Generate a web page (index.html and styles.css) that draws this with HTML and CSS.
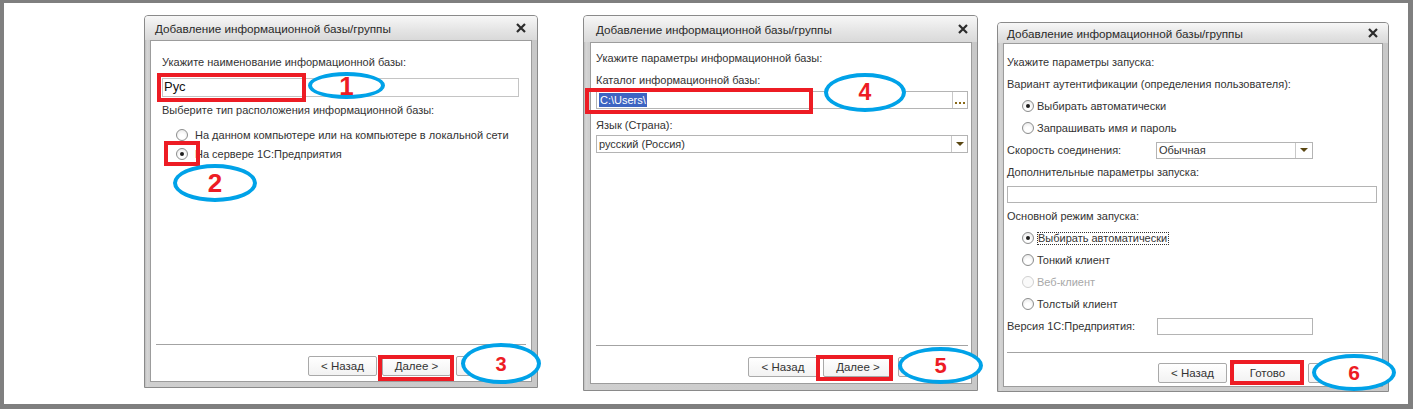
FILE: index.html
```html
<!DOCTYPE html>
<html lang="ru">
<head>
<meta charset="utf-8">
<title>Добавление информационной базы</title>
<link rel="stylesheet" href="styles.css">
</head>
<body>
<div class="canvas">

  <section class="dlg d1">
    <header class="tb">
      <span class="tt">Добавление информационной базы/группы</span>
      <svg class="x" width="10" height="10" viewBox="0 0 10 10"><path d="M1 1L9 9M9 1L1 9" stroke="#2b2b2b" stroke-width="2.2"/></svg>
    </header>
    <div class="body">
      <div class="main">
        <div class="lbl l1">Укажите наименование информационной базы:</div>
        <div class="inp name">Рус</div>
        <div class="lbl l2">Выберите тип расположения информационной базы:</div>
        <div class="radio r1"><span class="rb"></span>На данном компьютере или на компьютере в локальной сети</div>
        <div class="radio"><span class="rb on"></span>На сервере 1С:Предприятия</div>
      </div>
      <div class="foot">
        <button class="btn">&lt; Назад</button>
        <button class="btn">Далее &gt;</button>
        <button class="btn" aria-label="Отмена"></button>
      </div>
    </div>
    <span class="red m1a"></span>
    <span class="oval o1a"><b class="num n1">1</b></span>
    <span class="red m1b"></span>
    <span class="oval o1b"><b class="num n2">2</b></span>
    <span class="red m1c"></span>
    <span class="oval o1c"><b class="num n3">3</b></span>
  </section>

  <section class="dlg d2">
    <header class="tb">
      <span class="tt">Добавление информационной базы/группы</span>
      <svg class="x" width="10" height="10" viewBox="0 0 10 10"><path d="M1 1L9 9M9 1L1 9" stroke="#2b2b2b" stroke-width="2.2"/></svg>
    </header>
    <div class="body">
      <div class="main">
        <div class="lbl a1">Укажите параметры информационной базы:</div>
        <div class="lbl a2">Каталог информационной базы:</div>
        <div class="inp path"><span class="sel">C:\Users\</span><span class="dots"><svg width="11" height="3" viewBox="0 0 11 3"><rect x="0" y="0" width="2" height="2" fill="#8a6a1a"/><rect x="4" y="0" width="2" height="2" fill="#8a6a1a"/><rect x="8" y="0" width="2" height="2" fill="#8a6a1a"/></svg></span></div>
        <div class="lbl a3">Язык (Страна):</div>
        <div class="inp combo lang"><span class="val">русский (Россия)</span><span class="dd"><i class="arr"></i></span></div>
      </div>
      <div class="foot">
        <button class="btn">&lt; Назад</button>
        <button class="btn">Далее &gt;</button>
        <button class="btn" aria-label="Отмена"></button>
      </div>
    </div>
    <span class="red m2a"></span>
    <span class="oval o2a"><b class="num n4">4</b></span>
    <span class="red m2b"></span>
    <span class="oval o2b"><b class="num n5">5</b></span>
  </section>

  <section class="dlg d3">
    <header class="tb">
      <span class="tt">Добавление информационной базы/группы</span>
      <svg class="x" width="10" height="10" viewBox="0 0 10 10"><path d="M1 1L9 9M9 1L1 9" stroke="#2b2b2b" stroke-width="2.2"/></svg>
    </header>
    <div class="body">
      <div class="main">
        <div class="row">Укажите параметры запуска:</div>
        <div class="row">Вариант аутентификации (определения пользователя):</div>
        <div class="row radio"><span class="rb on"></span>Выбирать автоматически</div>
        <div class="row radio"><span class="rb"></span>Запрашивать имя и пароль</div>
        <div class="row"><span class="cap">Скорость соединения:</span><span class="inp combo speed"><span class="val">Обычная</span><span class="dd"><i class="arr"></i></span></span></div>
        <div class="row">Дополнительные параметры запуска:</div>
        <div class="row"><span class="inp wide"></span></div>
        <div class="row">Основной режим запуска:</div>
        <div class="row radio"><span class="rb on"></span><span class="focus">Выбирать автоматически</span></div>
        <div class="row radio"><span class="rb"></span>Тонкий клиент</div>
        <div class="row radio off"><span class="rb"></span>Веб-клиент</div>
        <div class="row radio"><span class="rb"></span>Толстый клиент</div>
        <div class="row"><span class="cap">Версия 1С:Предприятия:</span><span class="inp ver"></span></div>
      </div>
      <div class="foot">
        <button class="btn">&lt; Назад</button>
        <button class="btn">Готово</button>
        <button class="btn" aria-label="Отмена"></button>
      </div>
    </div>
    <span class="red m3a"></span>
    <span class="oval o3a"><b class="num n6">6</b></span>
  </section>

</div>
</body>
</html>
```
FILE: styles.css
```css
html, body {
  margin: 0;
  padding: 0;
  background: #fff;
}

.canvas {
  width: 1413px;
  height: 409px;
  box-sizing: border-box;
  border-style: solid;
  border-color: #7f7f7f;
  border-width: 3px 5px 5px 4px;
  background: #fff;
  display: flex;
  align-items: flex-start;
  font-family: "Liberation Sans", Arial, sans-serif;
  color: #333;
}

/* dialog window */
.dlg {
  position: relative;
  box-sizing: border-box;
  display: flex;
  flex-direction: column;
  border: 1px solid #8a8a8a;
  border-radius: 4px 4px 0 0;
  background: linear-gradient(90deg, #bdbdbd, #d6d6d6 2px, #cfcfcf 4px, #c8c8c8);
  padding: 0 5px 5px;
}
.d1 { margin: 12px 0 0 140px; width: 394px; height: 373px; }
.d2 { margin: 12px 0 0 45px; width: 395px; height: 376px; padding: 0 5px 6px 6px; }
.d3 { margin: 19px 0 0 19px; width: 392px; height: 370px; padding: 0 5px 4px; }

.tb {
  display: flex;
  align-items: center;
  justify-content: space-between;
  height: 24px;
  margin: 0 -5px;
  padding: 0 11px 0 10px;
  background: linear-gradient(#f7f7f7, #e4e4e4 60%, #d9d9d9);
  border-radius: 3px 3px 0 0;
  font-size: 11.7px;
  color: #2a2a2a;
}
.d2 .tb { height: 26px; margin: 0 -5px 0 -6px; padding: 0 9px 0 12px; }
.d3 .tb { height: 20px; padding: 0 10px 0 9px; }
.x { display: block; }

.body {
  flex: 1;
  display: flex;
  flex-direction: column;
  background: #fff;
  border: 1px solid #9c9c9c;
}
.main { flex: 1; display: flex; flex-direction: column; }

.lbl { line-height: 14px; white-space: nowrap; }

.inp {
  box-sizing: border-box;
  border: 1px solid #b4b4b4;
  background: #fff;
}

/* radios */
.radio { display: flex; align-items: center; white-space: nowrap; }
.rb {
  position: relative;
  flex: none;
  box-sizing: border-box;
  width: 12px;
  height: 12px;
  border-radius: 50%;
  border: 1px solid #8c8d8d;
  background: radial-gradient(circle at 50% 65%, #fff 30%, #e3e3e3);
}
.rb.on::after {
  content: "";
  position: absolute;
  left: 3px;
  top: 3px;
  width: 4px;
  height: 4px;
  border-radius: 50%;
  background: #1e1e1e;
}

/* dialog 1 content */
.d1 .main { padding: 14px 12px 0 11px; font-size: 11px; }
.d1 .l2 { margin-top: 6px; }
.name {
  margin-top: 9px;
  height: 19px;
  border-color: #c4c4c4;
  font-size: 13px;
  line-height: 13px;
  padding: 1px 0 0 1px;
  color: #111;
}
.d1 .radio { height: 19px; padding-left: 14px; }
.d1 .r1 { margin-top: 8px; }
.d1 .rb { margin-right: 7px; }

/* dialog 2 content */
.d2 .main { padding: 8px 3px 0 5px; font-size: 11px; }
.d2 .a2 { margin-top: 8px; }
.d2 .a3 { margin-top: 9px; }
.path {
  margin-top: 4px;
  height: 18px;
  display: flex;
  align-items: center;
  justify-content: space-between;
  padding-left: 2px;
}
.sel {
  background: #3d64c2;
  color: #fff;
  line-height: 14px;
  padding: 0 1px;
}
.dots {
  align-self: stretch;
  width: 15px;
  border-left: 1px solid #c8c8c8;
  display: flex;
  align-items: flex-end;
  justify-content: center;
  padding-bottom: 3px;
  box-sizing: border-box;
}
.dots svg { display: block; }
.combo {
  display: flex;
  align-items: center;
  justify-content: space-between;
}
.lang { margin-top: 3px; height: 18px; padding-left: 2px; }
.val { line-height: 14px; }
.dd {
  align-self: stretch;
  width: 15px;
  border-left: 1px solid #c8c8c8;
  display: flex;
  align-items: center;
  justify-content: center;
}
.arr {
  width: 0;
  height: 0;
  border-left: 4px solid transparent;
  border-right: 4px solid transparent;
  border-top: 4px solid #5a4712;
}

/* dialog 3 content */
.d3 .main { padding: 7px 5px 0 3px; font-size: 11px; }
.row {
  height: 22px;
  display: flex;
  align-items: center;
  white-space: nowrap;
}
.d3 .radio { padding-left: 15px; }
.d3 .rb { margin-right: 3px; }
.cap { width: 149px; flex: none; }
.speed { width: 157px; height: 17px; padding-left: 2px; }
.speed .dd { width: 16px; }
.wide { width: 100%; height: 17px; }
.ver { width: 156px; height: 17px; margin-left: 1px; }
.focus {
  border: 1px dotted #333;
  line-height: 11px;
  padding: 0 1px 0 0;
}
.off { color: #a8a8a8; }
.off .rb { border-color: #d0d0d0; background: #fafafa; }

/* footers */
.foot {
  display: flex;
  justify-content: flex-end;
  gap: 5px;
  border-top: 1px solid #a3a3a3;
}
.d1 .foot { margin: 0 5px; padding: 11px 1px 5px 0; }
.d2 .foot { margin: 0 3px 0 5px; padding: 11px 0 6px 0; }
.d3 .foot { margin: 0 4px 0 3px; padding: 10px 1px 3px 0; gap: 6px; }
.btn {
  width: 70px;
  height: 20px;
  padding: 0;
  box-sizing: border-box;
  border: 1px solid #a9a9a9;
  border-radius: 2px;
  background: linear-gradient(#ffffff, #f2f2f2);
  font-family: "Liberation Sans", Arial, sans-serif;
  font-size: 11.5px;
  color: #333;
}
.d1 .btn { width: 69px; }
.d3 .btn { width: 69px; }

/* annotations */
.red {
  position: absolute;
  box-sizing: border-box;
  border: 4px solid #ed1c24;
}
.oval {
  position: absolute;
  box-sizing: border-box;
  border: 4px solid #00a2e8;
  border-radius: 50%;
  background: #fff;
  display: flex;
  align-items: center;
  justify-content: center;
}
.num {
  color: #ed1c24;
  font-family: "Liberation Sans", Arial, sans-serif;
  font-weight: bold;
  line-height: 1;
}
.n1, .n2 { font-size: 26px; }
.n3 { font-size: 20px; }
.n4 { font-size: 23px; }
.n5 { font-size: 22px; }
.n6 { font-size: 21px; }

.m1a { left: 12px; top: 57px; width: 149px; height: 29px; }
.o1a { left: 163px; top: 56px; width: 77px; height: 27px; }
.m1b { left: 19px; top: 125px; width: 36px; height: 25px; }
.o1b { left: 28px; top: 148px; width: 84px; height: 38px; }
.m1c { left: 233px; top: 339px; width: 76px; height: 26px; }
.o1c { left: 316px; top: 327px; width: 80px; height: 41px; }

.m2a { left: 1px; top: 72px; width: 228px; height: 26px; }
.o2a { left: 240px; top: 57px; width: 82px; height: 39px; }
.m2b { left: 232px; top: 339px; width: 77px; height: 26px; }
.o2b { left: 314px; top: 331px; width: 85px; height: 37px; }

.m3a { left: 232px; top: 337px; width: 74px; height: 25px; }
.o3a { left: 314px; top: 331px; width: 84px; height: 37px; }
```
